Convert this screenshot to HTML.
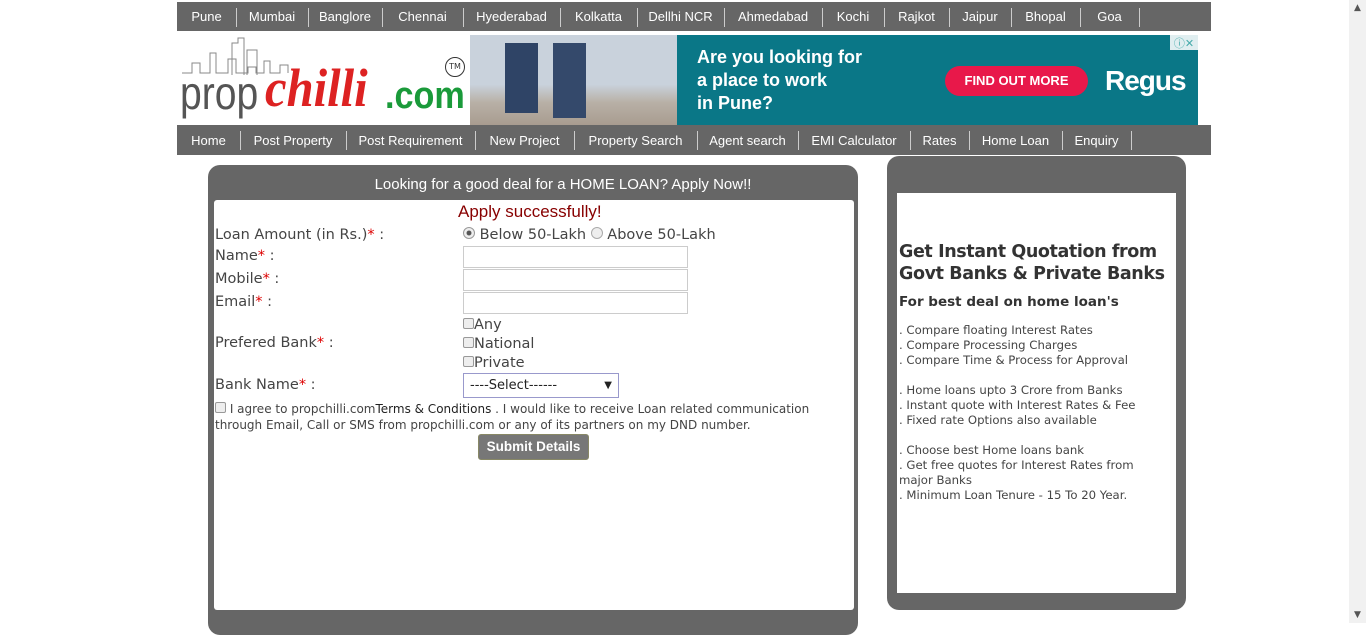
<!DOCTYPE html>
<html><head><meta charset="utf-8"><style>
*{margin:0;padding:0;box-sizing:border-box}
body{width:1366px;height:623px;overflow:hidden;background:#fff;font-family:"DejaVu Sans","Liberation Sans",sans-serif;position:relative;color:#444}
.nav{position:absolute;left:177px;width:1034px;background:#666;color:#fff;font-size:13px;font-family:"Liberation Sans",sans-serif}
.nav span{position:absolute;top:0;height:100%;display:flex;align-items:center;justify-content:center;white-space:nowrap}
.nav i{position:absolute;top:6px;width:1px;height:19px;background:#ccc}
.abs{position:absolute}
.lbl{position:absolute;left:215px;font-size:14.5px;color:#444}
.lbl b{color:#d00;font-weight:normal}
.inp{position:absolute;left:463px;width:225px;height:22px;border:1px solid #ccc;background:#fff}
.cb{display:inline-block;width:11px;height:11px;border:1px solid #999;border-radius:2px;background:#eee;vertical-align:0}
.r{font-size:11.7px;line-height:15px;color:#444}
</style></head><body>
<div class="nav" style="top:2px;height:29px">
<span style="left:0;width:59px">Pune</span><i style="left:59px"></i>
<span style="left:59px;width:72px">Mumbai</span><i style="left:131px"></i>
<span style="left:131px;width:74px">Banglore</span><i style="left:205px"></i>
<span style="left:205px;width:81px">Chennai</span><i style="left:286px"></i>
<span style="left:286px;width:97px">Hyederabad</span><i style="left:383px"></i>
<span style="left:383px;width:77px">Kolkatta</span><i style="left:460px"></i>
<span style="left:460px;width:87px">Dellhi NCR</span><i style="left:547px"></i>
<span style="left:547px;width:98px">Ahmedabad</span><i style="left:645px"></i>
<span style="left:645px;width:62px">Kochi</span><i style="left:707px"></i>
<span style="left:707px;width:65px">Rajkot</span><i style="left:772px"></i>
<span style="left:772px;width:62px">Jaipur</span><i style="left:834px"></i>
<span style="left:834px;width:69px">Bhopal</span><i style="left:903px"></i>
<span style="left:903px;width:59px">Goa</span><i style="left:962px"></i>
</div>
<div class="abs" style="left:177px;top:35px;width:293px;height:90px;overflow:hidden">
<svg width="293" height="90"><g stroke="#888" fill="none" stroke-width="1"><path d="M5 38h10v-10h8v10h10v-20h6v20h12v-14h8v14h12v-6h8v6h8v-12h6v12h10v-8h8v8"/><path d="M55 40V8h6V3h6v37M70 40V15h10v25"/></g></svg>
<div class="abs" style="left:3px;top:33px;font-size:46px;line-height:50px;color:#555;font-family:'Liberation Sans',sans-serif;transform:scaleX(0.85);transform-origin:left">prop</div>
<div class="abs" style="left:88px;top:24px;font-size:54px;line-height:58px;color:#d22;font-family:'Liberation Serif',serif;font-style:italic;font-weight:bold;transform:scaleX(0.9);transform-origin:left">chilli</div>
<div class="abs" style="left:208px;top:38px;font-size:38px;line-height:46px;color:#1a9a3a;font-weight:bold;font-family:'Liberation Sans',sans-serif;transform:scaleX(0.9);transform-origin:left">.com</div>
<div class="abs" style="left:268px;top:22px;width:20px;height:20px;border:1.5px solid #333;border-radius:50%;font-size:8px;text-align:center;line-height:17px;color:#333">TM</div>
</div>
<div class="abs" style="left:470px;top:35px;width:207px;height:90px;background:linear-gradient(#c9d2dc 0,#c9d2dc 55%,#b8b0a6 75%,#a89c90 100%)">
<div class="abs" style="left:35px;top:8px;width:33px;height:70px;background:#2f4466"></div>
<div class="abs" style="left:83px;top:8px;width:33px;height:75px;background:#34496b"></div>
</div>
<div class="abs" style="left:677px;top:35px;width:521px;height:90px;background:#0a7787;color:#fff;font-family:'Liberation Sans',sans-serif">
<div class="abs" style="left:20px;top:11px;font-size:18px;line-height:23px;font-weight:bold">Are you looking for<br>a place to work<br>in Pune?</div>
<div class="abs" style="left:268px;top:31px;width:143px;height:30px;background:#e8184a;border-radius:15px;font-size:13px;font-weight:bold;text-align:center;line-height:30px">FIND OUT MORE</div>
<div class="abs" style="left:428px;top:30px;font-size:28px;font-weight:bold;letter-spacing:-1px">Regus</div>
<div class="abs" style="left:493px;top:0;width:28px;height:15px;background:#e0eef0;color:#4aa;font-size:11px;text-align:center">ⓘ✕</div>
</div>
<div class="nav" style="top:125px;height:30px">
<span style="left:0;width:63px">Home</span><i style="left:63px"></i>
<span style="left:63px;width:106px">Post Property</span><i style="left:169px"></i>
<span style="left:169px;width:129px">Post Requirement</span><i style="left:298px"></i>
<span style="left:298px;width:99px">New Project</span><i style="left:397px"></i>
<span style="left:397px;width:123px">Property Search</span><i style="left:520px"></i>
<span style="left:520px;width:101px">Agent search</span><i style="left:621px"></i>
<span style="left:621px;width:112px">EMI Calculator</span><i style="left:733px"></i>
<span style="left:733px;width:59px">Rates</span><i style="left:792px"></i>
<span style="left:792px;width:93px">Home Loan</span><i style="left:885px"></i>
<span style="left:885px;width:69px">Enquiry</span><i style="left:954px"></i>
</div>

<div class="abs" style="left:208px;top:165px;width:650px;height:470px;background:#666;border-radius:12px">
<div style="color:#fff;font-size:15px;font-family:'Liberation Sans',sans-serif;text-align:center;margin-top:11px;padding-left:60px">Looking for a good deal for a HOME LOAN? Apply Now!!</div>
<div class="abs" style="left:6px;top:35px;width:640px;height:410px;background:#fff;border-radius:3px"></div>
</div>
<div class="abs" style="left:458px;top:202px;font-size:17px;color:#800;font-family:'Liberation Sans',sans-serif">Apply successfully!</div>
<div class="lbl" style="top:227px">Loan Amount (in Rs.)<b>*</b> :</div>
<div class="abs" style="left:463px;top:227px;font-size:14.5px"><span style="display:inline-block;width:12px;height:12px;border:1px solid #999;border-radius:50%;background:radial-gradient(#555 30%,#eee 40%)"></span> Below 50-Lakh <span style="display:inline-block;width:12px;height:12px;border:1px solid #aaa;border-radius:50%;background:#eee"></span> Above 50-Lakh</div>
<div class="lbl" style="top:248px">Name<b>*</b> :</div><div class="inp" style="top:246px"></div>
<div class="lbl" style="top:271px">Mobile<b>*</b> :</div><div class="inp" style="top:269px"></div>
<div class="lbl" style="top:294px">Email<b>*</b> :</div><div class="inp" style="top:292px"></div>
<div class="abs" style="left:463px;top:316px;font-size:14.5px;line-height:19px"><span class="cb"></span>Any<br><span class="cb"></span>National<br><span class="cb"></span>Private</div>
<div class="lbl" style="top:335px">Prefered Bank<b>*</b> :</div>
<div class="lbl" style="top:377px">Bank Name<b>*</b> :</div>
<div class="abs" style="left:463px;top:373px;width:156px;height:25px;border:1px solid #99c;font-size:13px;line-height:23px;padding-left:6px;color:#222">----Select------<span style="position:absolute;right:6px;font-size:10px">▼</span></div>
<div class="abs" style="left:215px;top:401px;width:630px;font-size:12px;line-height:16px;color:#444"><span class="cb"></span> I agree to propchilli.com<span style="color:#222">Terms &amp; Conditions</span> . I would like to receive Loan related communication through Email, Call or SMS from propchilli.com or any of its partners on my DND number.</div>
<div class="abs" style="left:478px;top:434px;width:111px;height:26px;background:#777;border:1px solid #886;border-radius:3px;color:#fff;font-weight:bold;font-size:13.5px;font-family:'Liberation Sans',sans-serif;text-align:center;line-height:24px;white-space:nowrap">Submit Details</div>

<div class="abs" style="left:887px;top:156px;width:299px;height:454px;background:#666;border-radius:12px">
<div class="abs" style="left:10px;top:37px;width:279px;height:400px;background:#fff;padding:48px 20px 0 2px">
<div style="font-size:17.5px;font-weight:bold;color:#333;line-height:22px;letter-spacing:-0.4px;margin-right:-18px">Get Instant Quotation from Govt Banks &amp; Private Banks</div>
<div style="font-size:13.5px;font-weight:bold;color:#333;margin-top:9px">For best deal on home loan's</div>
<div class="r" style="margin-top:13px">. Compare floating Interest Rates<br>. Compare Processing Charges<br>. Compare Time &amp; Process for Approval<br><br>. Home loans upto 3 Crore from Banks<br>. Instant quote with Interest Rates &amp; Fee<br>. Fixed rate Options also available<br><br>. Choose best Home loans bank<br>. Get free quotes for Interest Rates from major Banks<br>. Minimum Loan Tenure - 15 To 20 Year.</div>
</div></div>
<div class="abs" style="left:1349px;top:0;width:17px;height:623px;background:#f1f1f1;color:#555;font-size:9px;text-align:center">
<div style="position:absolute;top:3px;width:17px">▲</div><div style="position:absolute;bottom:3px;width:17px">▼</div></div>
</body></html>
